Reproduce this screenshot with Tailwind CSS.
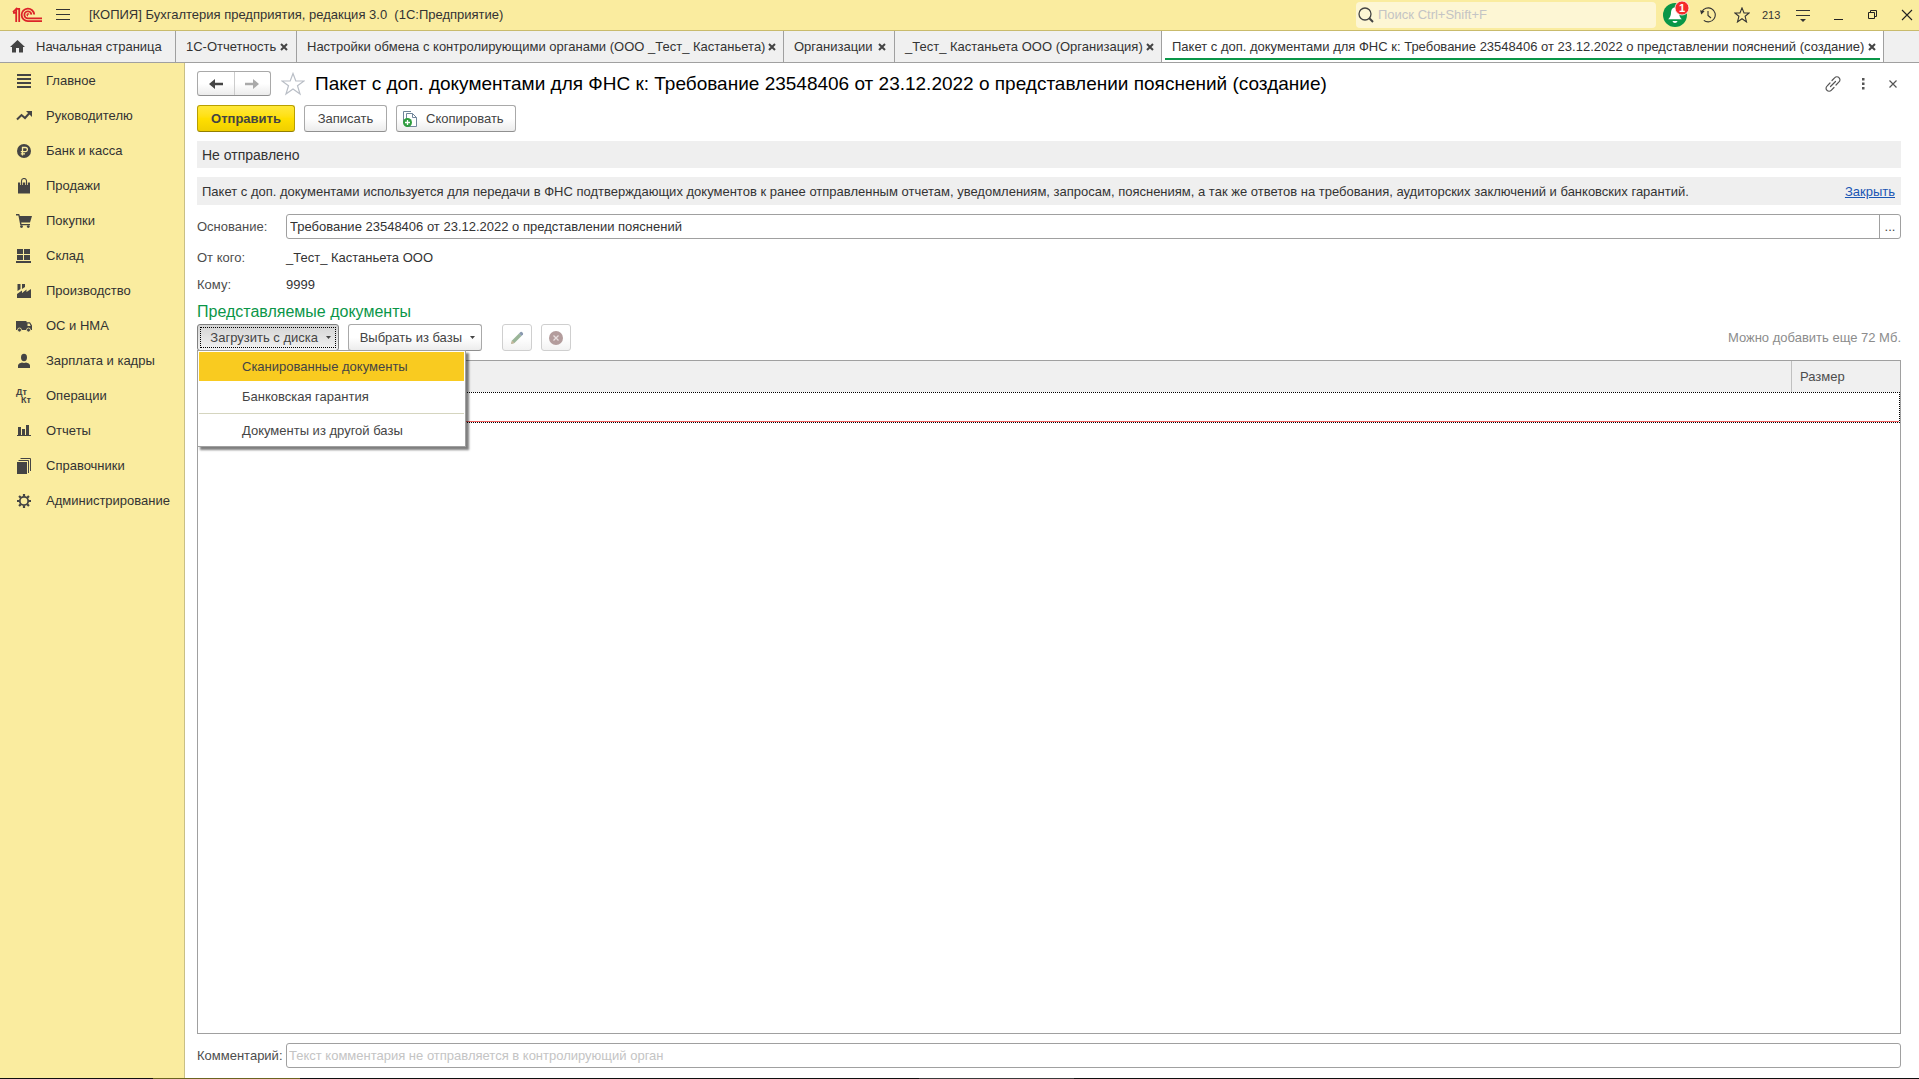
<!DOCTYPE html>
<html lang="ru">
<head>
    <meta charset="UTF-8">
    <meta name="viewport" content="width=device-width, initial-scale=1.0">
    <title>Бухгалтерия предприятия, редакция 3.0</title>
    <script src="https://cdn.jsdelivr.net/npm/@tailwindcss/browser@4"></script>
</head>
<body class="h-screen flex flex-col overflow-hidden bg-white font-['Liberation_Sans',Arial,sans-serif] text-[13px] leading-4 text-[#333333]">

    <!-- Title bar -->
    <header class="flex items-center h-[31px] shrink-0 bg-[#faec9f] border-b border-[#c9bb6c] pl-3 pr-1">
        <svg class="w-[31px] h-4 shrink-0" viewBox="0 0 31 16" fill="none" stroke="#dc2329" stroke-width="1.8">
            <path d="M1 5.2 4.2 2.2V15M3.500 1.800H7.200V15M1 5.8H4" />
            <path d="M22.200 7.500A6.3 6.3 0 1 0 16 14.200H30" />
            <path d="M19.400 7.600A3.500 3.500 0 1 0 16.200 11.400H30" />
            <path d="M17 7.500A1 1 0 1 0 16 8.800" stroke-width="1.200" />
        </svg>
        <button class="ml-2.5 w-5 h-5 flex items-center justify-center" aria-label="Меню">
            <svg class="w-4 h-4" viewBox="0 0 16 16" stroke="#333" stroke-width="1"><path d="M1 2.5H15M1 7.5H15M1 12.5H15" /></svg>
        </button>
        <h1 class="ml-4 whitespace-pre">[КОПИЯ] Бухгалтерия предприятия, редакция 3.0  (1С:Предприятие)</h1>

        <div class="ml-auto flex items-center">
            <label class="flex items-center w-[300px] h-[26px] rounded-sm bg-[#fdf6d4] pl-0.5">
                <svg class="w-4 h-4 shrink-0" viewBox="0 0 16 16" fill="none" stroke="#444"><circle cx="7" cy="7" r="6" stroke-width="1.3" /><path d="M11.3 11.3 15 15" stroke-width="2" /></svg>
                <input type="search" placeholder="Поиск Ctrl+Shift+F" aria-label="Поиск" class="flex-1 min-w-0 ml-1 bg-transparent outline-none placeholder:text-[#c4c4c4]">
            </label>
            <button class="ml-1.5 w-7 h-[30px] flex items-center" aria-label="Уведомления">
                <svg class="w-7 h-7" viewBox="0 0 28 28">
                    <circle cx="13" cy="14" r="12" fill="#0a9648" />
                    <path d="M13 6.5c-3 0-3.8 2.4-4 5.500-.2 3-1 4.500-2.800 6.300h13.600C18 16.500 17.200 15 17 12c-.2-3.100-1-5.500-4-5.500zM10.500 20h5c-.3 1.300-1.300 2-2.500 2s-2.200-.7-2.500-2z" fill="#fff" />
                    <circle cx="20" cy="7" r="7" fill="#f52a2a" stroke="#fff" stroke-width=".8" />
                    <text x="20" y="11" text-anchor="middle" font-size="11" font-weight="bold" fill="#fff">1</text>
                </svg>
            </button>
            <button class="ml-2.5 w-4" aria-label="История">
                <svg class="w-4 h-4" viewBox="0 0 16 16" fill="none" stroke="#333" stroke-width="1.1"><path d="M1.800 5.200A7 7 0 1 1 3.800 13.300" /><path d="M8 4V8.500L11 11" /><path d="M0 3.200 4.600 4.200 1.300 7.400z" fill="#333" stroke="none" /></svg>
            </button>
            <button class="ml-[18px] w-4" aria-label="Избранное">
                <svg class="w-4 h-4" viewBox="0 0 16 16" fill="none" stroke="#333" stroke-width="1.1"><path d="M8 .9 10 6H15.200L11.100 9.300 12.500 14.900 8 11.700 3.500 14.900 4.900 9.300.8 6H6z" /></svg>
            </button>
            <span class="ml-3 text-[11px] w-[19px]">213</span>
            <button class="ml-3.5 w-4" aria-label="Настройка панели">
                <svg class="w-4 h-4" viewBox="0 0 16 16"><path d="M1 3.500H15M1 8.500H15" stroke="#333" /><path d="M5 12H11L8 15z" fill="#333" /></svg>
            </button>
            <button class="ml-5 w-4" aria-label="Свернуть">
                <svg class="w-4 h-4" viewBox="0 0 16 16"><path d="M3 12.500H12" stroke="#222" /></svg>
            </button>
            <button class="ml-[18px] w-4" aria-label="Развернуть">
                <svg class="w-4 h-4" viewBox="0 0 16 16" fill="none" stroke="#222"><path d="M3.500 5.500h6v6h-6zM5.500 5.500v-2h6v6h-2" /></svg>
            </button>
            <button class="ml-[18px] w-4" aria-label="Закрыть программу">
                <svg class="w-4 h-4" viewBox="0 0 16 16" stroke="#222" stroke-width="1.1"><path d="M3 3 13 13M13 3 3 13" /></svg>
            </button>
        </div>
    </header>

    <!-- Open windows -->
    <nav class="flex h-8 shrink-0 bg-[#f0f0f0] border-b border-[#a0a0a0] whitespace-nowrap">
        <a href="#" class="flex items-center w-[176px] pl-2.5 border-r border-[#a0a0a0]">
            <svg class="w-[15px] h-[13px] mr-[11px]" viewBox="0 0 15 13" fill="#444"><path d="M7.500 0 15 7H13V12.500H9V8H6V12.500H2V7H0z" /></svg>
            Начальная страница
        </a>
        <div class="flex items-center justify-between w-[121px] pl-2.5 pr-2 border-r border-[#a0a0a0]">
            <a href="#">1С-Отчетность</a>
            <button class="w-2" aria-label="Закрыть вкладку"><svg class="w-2 h-2" viewBox="0 0 8 8" stroke="#444" stroke-width="2"><path d="M1 1 7 7M7 1 1 7" /></svg></button>
        </div>
        <div class="flex items-center justify-between w-[487px] pl-2.5 pr-[7px] border-r border-[#a0a0a0]">
            <a href="#">Настройки обмена с контролирующими органами (ООО _Тест_ Кастаньета)</a>
            <button class="w-2" aria-label="Закрыть вкладку"><svg class="w-2 h-2" viewBox="0 0 8 8" stroke="#444" stroke-width="2"><path d="M1 1 7 7M7 1 1 7" /></svg></button>
        </div>
        <div class="flex items-center justify-between w-[111px] pl-2.5 pr-2 border-r border-[#a0a0a0]">
            <a href="#">Организации</a>
            <button class="w-2" aria-label="Закрыть вкладку"><svg class="w-2 h-2" viewBox="0 0 8 8" stroke="#444" stroke-width="2"><path d="M1 1 7 7M7 1 1 7" /></svg></button>
        </div>
        <div class="flex items-center justify-between w-[267px] pl-2.5 pr-[7px] border-r border-[#a0a0a0]">
            <a href="#">_Тест_ Кастаньета ООО (Организация)</a>
            <button class="w-2" aria-label="Закрыть вкладку"><svg class="w-2 h-2" viewBox="0 0 8 8" stroke="#444" stroke-width="2"><path d="M1 1 7 7M7 1 1 7" /></svg></button>
        </div>
        <div class="w-[722px] px-[3px] pb-0.5 bg-white border-r border-[#a0a0a0]">
            <div class="flex items-center justify-between h-full pt-1 pl-[7px] pr-1 border-b-2 border-[#0a9648]">
                <a href="#">Пакет с доп. документами для ФНС к: Требование 23548406 от 23.12.2022 о представлении пояснений (создание)</a>
                <button class="w-2" aria-label="Закрыть вкладку"><svg class="w-2 h-2" viewBox="0 0 8 8" stroke="#444" stroke-width="2"><path d="M1 1 7 7M7 1 1 7" /></svg></button>
            </div>
        </div>
    </nav>

    <div class="flex flex-1 min-h-0">
        <!-- Sections -->
        <aside class="w-[185px] shrink-0 bg-[#faec9f] border-r border-[#c9bf85]">
            <ul>
                <li><a href="#" class="flex items-center h-[35px] pl-4 gap-3.5">
                    <svg class="w-4 h-4" viewBox="0 0 16 16" fill="#444"><path d="M1 1h14v2H1zM1 5h14v2H1zM1 9h14v2H1zM1 13h14v2H1z" /></svg>Главное</a></li>
                <li><a href="#" class="flex items-center h-[35px] pl-4 gap-3.5">
                    <svg class="w-4 h-4" viewBox="0 0 16 16" fill="none" stroke="#444" stroke-width="2"><path d="M1 11.500 5.500 7 9 10 13.500 5" /><path d="M10 3H16V9z" fill="#444" stroke="none" /></svg>Руководителю</a></li>
                <li><a href="#" class="flex items-center h-[35px] pl-4 gap-3.5">
                    <svg class="w-4 h-4" viewBox="0 0 16 16"><circle cx="8" cy="8" r="7" fill="#444" /><path d="M6.500 12.500V4.500H9.300a2 2 0 0 1 0 4.200H4.800M4.800 10.800H9" fill="none" stroke="#faec9f" stroke-width="1.300" /></svg>Банк и касса</a></li>
                <li><a href="#" class="flex items-center h-[35px] pl-4 gap-3.5">
                    <svg class="w-4 h-4" viewBox="0 0 16 16"><path d="M2 4.500h12V15.500H2z" fill="#444" /><path d="M5.500 7V3a2.500 2.500 0 0 1 5 0V7" fill="none" stroke="#faec9f" stroke-width="2.600" /><path d="M5.500 7V3a2.500 2.500 0 0 1 5 0V7" fill="none" stroke="#444" stroke-width="1.100" /></svg>Продажи</a></li>
                <li><a href="#" class="flex items-center h-[35px] pl-4 gap-3.5">
                    <svg class="w-4 h-4" viewBox="0 0 16 16" fill="#444"><path d="M0 1H3.200L3.900 3H16L14 9.500H5.200L5.500 11H14V12.300H4.300L2.400 2.400H0z" /><circle cx="5.500" cy="13.600" r="1.400" /><circle cx="12.300" cy="13.600" r="1.400" /></svg>Покупки</a></li>
                <li><a href="#" class="flex items-center h-[35px] pl-4 gap-3.5">
                    <svg class="w-4 h-4" viewBox="0 0 16 16" fill="#444"><path d="M1 1h6v5H1zM8 1h6v5H8zM1 7h6v5H1zM8 7h6v5H8zM0 13h15v2H0z" /></svg>Склад</a></li>
                <li><a href="#" class="flex items-center h-[35px] pl-4 gap-3.5">
                    <svg class="w-4 h-4" viewBox="0 0 16 16" fill="#444"><path d="M1 15V11L6 7.500V10L10.500 6.500V9L15 6V15z" /><path d="M1.500 1H4.500V6L1.500 8zM6 1H9V4L6 6z" /></svg>Производство</a></li>
                <li><a href="#" class="flex items-center h-[35px] pl-4 gap-3.5">
                    <svg class="w-4 h-4" viewBox="0 0 16 16"><path d="M0 3H10.500V4.200H14L16 7.500V12H0z" fill="#444" /><path d="M11.500 5.500H13.500L14.700 8H11.500z" fill="#faec9f" /><circle cx="3.500" cy="12" r="2" fill="#444" stroke="#faec9f" stroke-width=".8" /><circle cx="12.500" cy="12" r="2" fill="#444" stroke="#faec9f" stroke-width=".8" /></svg>ОС и НМА</a></li>
                <li><a href="#" class="flex items-center h-[35px] pl-4 gap-3.5">
                    <svg class="w-4 h-4" viewBox="0 0 16 16" fill="#444"><ellipse cx="8" cy="4.500" rx="3" ry="3.700" /><path d="M2 15V12.500C2 10.800 4 10 6 9.500 7 10 9 10 10 9.500 12 10 14 10.800 14 12.500V15z" /></svg>Зарплата и кадры</a></li>
                <li><a href="#" class="flex items-center h-[35px] pl-4 gap-3.5">
                    <svg class="w-4 h-4 overflow-visible" viewBox="0 0 16 16" fill="#444" font-size="9" font-weight="bold"><text x="0" y="6.500">Дт</text><text x="5" y="15">Кт</text></svg>Операции</a></li>
                <li><a href="#" class="flex items-center h-[35px] pl-4 gap-3.5">
                    <svg class="w-4 h-4" viewBox="0 0 16 16" fill="#444"><path d="M2 4h3v8H2zM6 6h3v6H6zM10 2h3v10h-3zM1 12h14v1H1z" /></svg>Отчеты</a></li>
                <li><a href="#" class="flex items-center h-[35px] pl-4 gap-3.5">
                    <svg class="w-4 h-4" viewBox="0 0 16 16" fill="#444"><path d="M1 4h10v12H1z" /><path d="M2.500 2.500H12.500V15M4.500 .5H14.500V13" fill="none" stroke="#444" /></svg>Справочники</a></li>
                <li><a href="#" class="flex items-center h-[35px] pl-4 gap-3.5">
                    <svg class="w-4 h-4" viewBox="0 0 16 16" fill="none" stroke="#444"><circle cx="8" cy="8" r="4.200" stroke-width="1.800" /><path d="M8 1V3.500M8 12.500V15M1 8H3.500M12.500 8H15M3.050 3.050 4.800 4.800M11.200 11.200 12.950 12.950M3.050 12.950 4.800 11.200M11.200 4.800 12.950 3.050" stroke-width="2.200" /></svg>Администрирование</a></li>
            </ul>
        </aside>

        <!-- Document form -->
        <main class="flex-1 min-w-0 flex flex-col pt-2 pl-3 pr-[18px] pb-2.5">
            <div class="flex items-center h-[25px]">
                <div class="flex h-[25px] w-[74px] rounded-[3px] border border-[#a9a9a9] border-b-[#909090] bg-linear-to-b from-white from-50% to-[#ececec]">
                    <button class="flex-1 flex items-center justify-center border-r border-[#cccccc]" aria-label="Назад">
                        <svg class="w-3.5 h-3" viewBox="0 0 14 12" fill="#444"><path d="M0 6 6 1V4.700H14V7.300H6V11z" /></svg>
                    </button>
                    <button class="flex-1 flex items-center justify-center" aria-label="Вперед">
                        <svg class="w-3.5 h-3" viewBox="0 0 14 12" fill="#aaa"><path d="M14 6 8 1V4.700H0V7.300H8V11z" /></svg>
                    </button>
                </div>
                <button class="ml-2.5 w-6" aria-label="В избранное">
                    <svg class="w-6 h-6" viewBox="0 0 24 24" fill="none" stroke="#b9bec6" stroke-width="1.200"><path d="M12 1.500 14.800 9H23L16.500 13.700 19 22 12 17 5 22 7.500 13.700 1 9H9.200z" /></svg>
                </button>
                <h2 class="ml-2.5 text-[19px] leading-6 text-black whitespace-nowrap">Пакет с доп. документами для ФНС к: Требование 23548406 от 23.12.2022 о представлении пояснений (создание)</h2>
                <div class="ml-auto flex items-center">
                    <button class="w-4" aria-label="Ссылка">
                        <svg class="w-4 h-4" viewBox="0 0 16 16" fill="none" stroke="#555" stroke-width="1.200" stroke-linecap="round"><path d="M7 4.500 9.800 1.700a2.800 2.800 0 0 1 4.200 0 2.800 2.800 0 0 1 0 4.200L11 9M9 11.500 6.200 14.300a2.800 2.800 0 0 1-4.200 0 2.800 2.800 0 0 1 0-4.200L5 7M5.500 10.500 10.500 5.500" /></svg>
                    </button>
                    <button class="ml-3.5 w-4" aria-label="Еще">
                        <svg class="w-4 h-4" viewBox="0 0 16 16" fill="#555"><path d="M7 2h2.500v2.500H7zM7 6.500h2.500V9H7zM7 11h2.500v2.500H7z" /></svg>
                    </button>
                    <button class="ml-3.5 w-4" aria-label="Закрыть форму">
                        <svg class="w-4 h-4" viewBox="0 0 16 16" stroke="#555" stroke-width="1.200"><path d="M4.500 4.500 11.500 11.500M11.500 4.500 4.500 11.500" /></svg>
                    </button>
                </div>
            </div>

            <div class="flex gap-[9px] mt-[9px] text-[#444444]">
                <button class="h-[27px] w-[98px] rounded-[3px] border border-[#b89f00] border-b-[#937f00] bg-linear-to-b from-[#ffe838] via-[#ffdf00] to-[#f0cf00] font-bold">Отправить</button>
                <button class="h-[27px] w-[83px] rounded-[3px] border border-[#a9a9a9] border-b-[#909090] bg-linear-to-b from-white from-50% to-[#ececec]">Записать</button>
                <button class="flex items-center h-[27px] w-[120px] pl-1.5 rounded-[3px] border border-[#a9a9a9] border-b-[#909090] bg-linear-to-b from-white from-50% to-[#ececec]">
                    <svg class="w-4 h-[18px] mr-[7px]" viewBox="0 0 16 18" fill="none" stroke="#71869b"><path d="M.5 12V1.500H8" /><path d="M3.500 3.500H9.500L13.500 7.500V16.500H3.500zM9.500 3.500V7.500H13.500" fill="#fff" /><circle cx="4.500" cy="12.500" r="4.500" fill="#2f9e3f" stroke="none" /><path d="M4.500 10V15M2 12.500H7" stroke="#fff" stroke-width="1.300" /></svg>
                    Скопировать
                </button>
            </div>

            <p class="mt-[9px] h-[27px] pl-[5px] flex items-center bg-[#efefef] text-sm">Не отправлено</p>

            <div class="mt-[9px] h-7 pt-0.5 pl-[5px] pr-1.5 flex items-center justify-between bg-[#efefef]">
                <p>Пакет с доп. документами используется для передачи в ФНС подтверждающих документов к ранее отправленным отчетам, уведомлениям, запросам, пояснениям, а так же ответов на требования, аудиторских заключений и банковских гарантий.</p>
                <a href="#" class="text-[#1a56b4] underline">Закрыть</a>
            </div>

            <div class="mt-[9px] flex items-center">
                <label for="basis" class="w-[89px] text-[#4d4d4d]">Основание:</label>
                <div class="flex flex-1 h-[25px] rounded-[3px] border border-[#a0a0a0]">
                    <input id="basis" type="text" value="Требование 23548406 от 23.12.2022 о представлении пояснений" class="flex-1 min-w-0 px-[3px] outline-none">
                    <button class="w-[21px] border-l border-[#a0a0a0] text-[#444444]" aria-label="Выбрать">...</button>
                </div>
            </div>
            <dl class="mt-[5px] grid grid-cols-[89px_1fr] auto-rows-[27px] items-center">
                <dt class="text-[#4d4d4d]">От кого:</dt>
                <dd>_Тест_ Кастаньета ООО</dd>
                <dt class="text-[#4d4d4d]">Кому:</dt>
                <dd>9999</dd>
            </dl>

            <h3 class="mt-0.5 text-base leading-6 h-6 text-[#0a9648]">Представляемые документы</h3>
            <div class="flex items-center h-[27px] text-[#444444]">
                <div class="relative">
                    <button class="block h-[27px] w-[142px] p-0.5 rounded-[3px] border border-[#808080] bg-linear-to-b from-[#d4d4d4] to-[#f2f2f2]">
                        <span class="flex items-center justify-end gap-2 h-full pr-1 border border-dotted border-black">
                            Загрузить с диска
                            <svg class="w-[5px] h-[3px]" viewBox="0 0 5 3" fill="#444"><path d="M0 0H5L2.500 3z" /></svg>
                        </span>
                    </button>
                    <ul class="absolute z-10 left-0 top-[26px] w-[269px] p-px border border-[#a0a0a0] bg-white shadow-[3px_3px_2px_#00000080]">
                        <li><button class="block w-full h-[29px] pl-[43px] text-left bg-[#f9cb20]">Сканированные документы</button></li>
                        <li><button class="block w-full h-8 pl-[43px] text-left">Банковская гарантия</button></li>
                        <li class="border-t border-[#d5d5bf]"><button class="block w-full h-[31px] pt-0.5 pl-[43px] text-left">Документы из другой базы</button></li>
                    </ul>
                </div>
                <button class="flex items-center justify-end gap-2 ml-[9px] h-[27px] w-[134px] pr-1.5 rounded-[3px] border border-[#a9a9a9] border-b-[#909090] bg-linear-to-b from-white from-50% to-[#ececec]">
                    Выбрать из базы
                    <svg class="w-[5px] h-[3px]" viewBox="0 0 5 3" fill="#444"><path d="M0 0H5L2.500 3z" /></svg>
                </button>
                <button class="flex items-center justify-center ml-5 h-[27px] w-[30px] rounded-[3px] border border-[#cfcfcf] bg-linear-to-b from-white from-50% to-[#f2f2f2]" aria-label="Изменить" disabled>
                    <svg class="w-3.5 h-3.5" viewBox="0 0 14 14"><path d="M1 13 2 9.500 9 2.500 11.500 5 4.500 12z" fill="#9ab598" /><path d="M9 2.500 10.500 1Q11.500 .3 12.500 1.500T13 3.500L11.500 5z" fill="#8a9ab0" /><path d="M1 13 2 9.500 4.500 12z" fill="#c9b79c" /></svg>
                </button>
                <button class="flex items-center justify-center ml-[9px] h-[27px] w-[30px] rounded-[3px] border border-[#cfcfcf] bg-linear-to-b from-white from-50% to-[#f2f2f2]" aria-label="Удалить" disabled>
                    <svg class="w-3.5 h-3.5" viewBox="0 0 14 14"><circle cx="7" cy="7" r="7" fill="#b39c9c" /><path d="M4.500 4.500 9.500 9.500M9.500 4.500 4.500 9.500" stroke="#e8dede" stroke-width="1.300" /></svg>
                </button>
                <span class="ml-auto text-[#8c8c8c]">Можно добавить еще 72 Мб.</span>
            </div>

            <div class="mt-[9px] flex-1 min-h-0 border border-[#a0a0a0] bg-white">
                <table class="w-full border-separate border-spacing-0 table-fixed text-[#4d4d4d]">
                    <thead>
                        <tr class="h-[31px] bg-[#f0f0f0]">
                            <th class="font-normal text-left pl-2 border-r border-[#c0c0c0]"></th>
                            <th class="w-[108px] font-normal text-left pl-2">Размер</th>
                        </tr>
                    </thead>
                    <tbody>
                        <tr>
                            <td colspan="2" class="p-0 border border-dotted border-black"><div class="h-[29px] border-b border-[#f06060]"></div></td>
                        </tr>
                    </tbody>
                </table>
            </div>

            <div class="mt-[9px] flex items-center">
                <label for="comment" class="w-[89px] text-[#4d4d4d]">Комментарий:</label>
                <input id="comment" type="text" placeholder="Текст комментария не отправляется в контролирующий орган" class="flex-1 h-[25px] px-0.5 rounded-[3px] border border-[#a0a0a0] outline-none placeholder:text-[#c4c4c4]">
            </div>
        </main>
    </div>

    <!-- Taskbar edge -->
    <footer class="flex h-px shrink-0 bg-[#101010]">
        <div class="w-[147px] ml-[153px] bg-[#6b6420]"></div>
        <div class="w-[155px] ml-[619px] bg-[#3a3a3a]"></div>
    </footer>
</body>
</html>
